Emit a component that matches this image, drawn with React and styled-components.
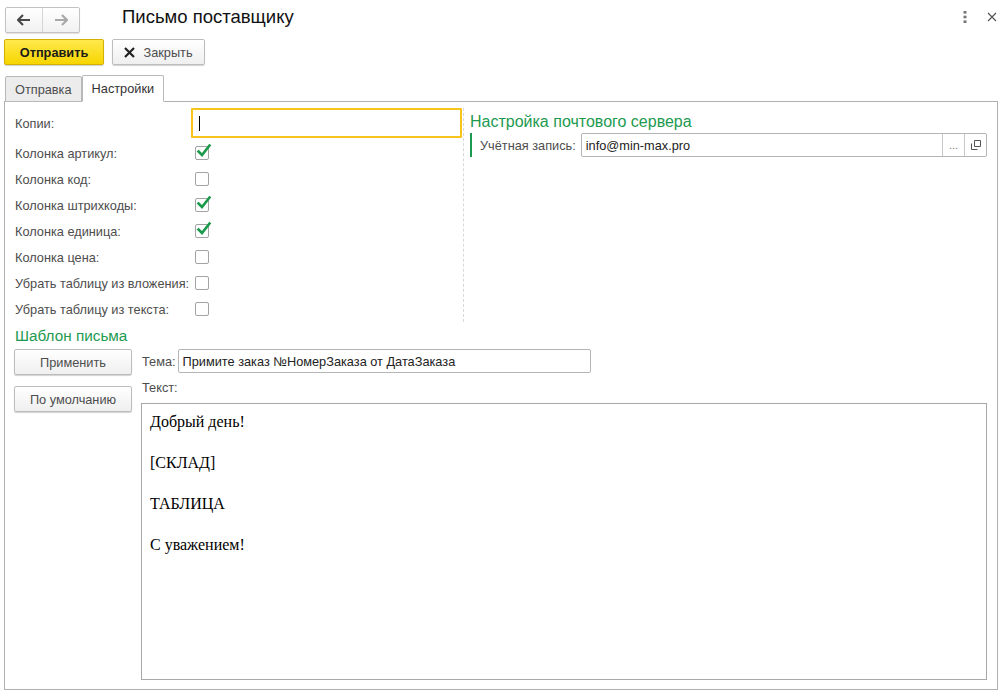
import React from 'react'
import styled, { createGlobalStyle } from 'styled-components'

const Global = createGlobalStyle`
  html, body { margin: 0; padding: 0; background: #fff; }
  body {
    font-family: "Liberation Sans", Arial, sans-serif;
    font-size: 12.75px;
    color: #4d4d4d;
  }
`

const Window = styled.div`
  width: 1004px;
  height: 696px;
  display: flex;
  flex-direction: column;
  box-sizing: border-box;
`

const Header = styled.div`
  display: flex;
  align-items: center;
  height: 34px;
  padding: 5px 0 0 5px;
  box-sizing: border-box;
`

const NavGroup = styled.div`
  display: flex;
  height: 24px;
  border: 1px solid #c3c3c3;
  border-radius: 2px;
  background: linear-gradient(#ffffff, #f1f1f1);
  box-shadow: 0 1px 1px rgba(0,0,0,0.12);
`

const NavBtn = styled.div`
  width: 36px;
  display: flex;
  align-items: center;
  justify-content: center;
  & + & { border-left: 1px solid #d6d6d6; }
`

const Title = styled.div`
  font-size: 18.5px;
  color: #111;
  margin-left: 42px;
  margin-top: -5px;
  flex: 1;
`

const HeaderIcons = styled.div`
  display: flex;
  align-items: center;
  gap: 20px;
  margin-right: 7px;
  margin-top: -5px;
`

const Toolbar = styled.div`
  display: flex;
  gap: 8px;
  padding: 5px 0 0 4px;
  height: 36px;
  box-sizing: border-box;
`

const Button = styled.div`
  height: 26px;
  box-sizing: border-box;
  border: 1px solid ${p => (p.$primary ? '#d4b000' : '#bdbdbd')};
  border-radius: 2px;
  background: ${p => (p.$primary ? 'linear-gradient(#ffe94d, #f7d500)' : 'linear-gradient(#ffffff, #efefef)')};
  box-shadow: 0 1px 1px rgba(0,0,0,0.18);
  display: flex;
  align-items: center;
  justify-content: center;
  gap: 8px;
  width: ${p => p.$w}px;
  color: ${p => (p.$primary ? '#1a1a1a' : '#4d4d4d')};
  font-weight: ${p => (p.$primary ? 700 : 400)};
`

const Tabs = styled.div`
  display: flex;
  align-items: flex-end;
  padding-left: 5px;
  height: 31px;
  box-sizing: border-box;
  position: relative;
  z-index: 1;
`

const Tab = styled.div`
  height: ${p => (p.$active ? 27 : 26)}px;
  box-sizing: border-box;
  padding: 0 9px;
  display: flex;
  align-items: center;
  border: 1px solid #b8b8b8;
  border-bottom: ${p => (p.$active ? '1px solid #fff' : '1px solid #b8b8b8')};
  background: ${p => (p.$active ? '#fff' : '#ececec')};
  color: ${p => (p.$active ? '#333' : '#4d4d4d')};
  border-radius: 2px 2px 0 0;
  margin-bottom: -1px;
`

const Panel = styled.div`
  margin: 0 6px 6px 4px;
  border: 1px solid #b0b0b0;
  flex: 1;
  display: flex;
  flex-direction: column;
  box-sizing: border-box;
  padding: 6px 10px 9px 10px;
`

const TopSection = styled.div`
  display: flex;
`

const LeftCol = styled.div`
  width: 448px;
  border-right: 1px dashed #d8d8d8;
`

const FieldRow = styled.div`
  display: grid;
  grid-template-columns: 176px 1fr;
  align-items: center;
  height: ${p => p.$h || 26}px;
  margin-bottom: ${p => p.$mb || 0}px;
`

const Label = styled.div`
  color: #4d4d4d;
  white-space: nowrap;
`

const FocusInput = styled.div`
  height: 30px;
  box-sizing: border-box;
  border: 2px solid #f7c41a;
  border-radius: 1px;
  width: 271px;
  display: flex;
  align-items: center;
  padding-left: 6px;
`

const Caret = styled.div`
  width: 1px;
  height: 15px;
  background: #000;
`

const Box = styled.div`
  width: 14px;
  height: 14px;
  box-sizing: border-box;
  border: 1px solid #a3a3a3;
  border-radius: 2px;
  position: relative;
  margin-left: 4px;
  & svg {
    position: absolute;
    left: 0;
    top: -4px;
  }
`

const RightCol = styled.div`
  flex: 1;
  padding-left: 6px;
  padding-top: 3px;
`

const GroupTitle = styled.div`
  color: #1d9a50;
  font-size: 16px;
  height: 22px;
  line-height: 22px;
  white-space: nowrap;
`

const AccountRow = styled.div`
  display: flex;
  align-items: center;
  height: 24px;
  border-left: 2px solid #1d9a50;
  padding-left: 8px;
  gap: 5px;
`

const InputBox = styled.div`
  height: 24px;
  box-sizing: border-box;
  border: 1px solid #b5b5b5;
  border-radius: 2px;
  display: flex;
  align-items: center;
  color: #222;
  width: ${p => (p.$w ? `${p.$w}px` : 'auto')};
  flex: ${p => (p.$w ? 'none' : 1)};
  overflow: hidden;
`

const InputText = styled.div`
  flex: 1;
  padding-left: 4px;
`

const InputBtn = styled.div`
  width: 21px;
  height: 100%;
  border-left: 1px solid #c8c8c8;
  display: flex;
  align-items: center;
  justify-content: center;
  color: #777;
  font-size: 11px;
`

const TemplateTitle = styled(GroupTitle)`
  font-size: 15.3px;
  margin-top: 3px;
  height: 21px;
`

const BottomSection = styled.div`
  display: flex;
  flex: 1;
  gap: 10px;
`

const ButtonsCol = styled.div`
  display: flex;
  flex-direction: column;
  gap: 11px;
  padding-top: 3px;
  margin-left: -1px;
`

const EditorCol = styled.div`
  flex: 1;
  display: flex;
  flex-direction: column;
`

const SubjectRow = styled.div`
  display: flex;
  align-items: center;
  gap: 2px;
  height: 24px;
  margin-top: 3px;
`

const TextLabel = styled.div`
  margin-top: 7px;
  height: 23px;
`

const TextArea = styled.div`
  flex: 1;
  border: 1px solid #a8a8a8;
  margin-left: -1px;
  padding: 8px 8px;
  font-family: "Liberation Serif", "Times New Roman", serif;
  font-size: 16px;
  color: #000;
  line-height: 20.5px;
  & p { margin: 0 0 20.5px 0; }
`

const Check = () => (
  <svg width="16" height="16" viewBox="0 0 16 16">
    <path d="M2.5 8.5 L6 12 L13.5 2.5" fill="none" stroke="#1a9a4a" strokeWidth="2.6" strokeLinecap="square" />
  </svg>
)

const CheckBox = ({ checked }) => <Box>{checked && <Check />}</Box>

const options = [
  ['Колонка артикул:', true],
  ['Колонка код:', false],
  ['Колонка штрихкоды:', true],
  ['Колонка единица:', true],
  ['Колонка цена:', false],
  ['Убрать таблицу из вложения:', false],
  ['Убрать таблицу из текста:', false],
]

export default function App() {
  return (
    <Window>
      <Global />
      <Header>
        <NavGroup>
          <NavBtn>
            <svg width="14" height="12" viewBox="0 0 14 12">
              <path d="M1 6 H13 M6 1 L1 6 L6 11" fill="none" stroke="#4a4a4a" strokeWidth="2.2" />
            </svg>
          </NavBtn>
          <NavBtn>
            <svg width="14" height="12" viewBox="0 0 14 12">
              <path d="M1 6 H13 M8 1 L13 6 L8 11" fill="none" stroke="#a8a8a8" strokeWidth="2.2" />
            </svg>
          </NavBtn>
        </NavGroup>
        <Title>Письмо поставщику</Title>
        <HeaderIcons>
          <svg width="4" height="12" viewBox="0 0 4 12">
            <rect x="0.5" y="0" width="3" height="2.6" fill="#777" />
            <rect x="0.5" y="4.7" width="3" height="2.6" fill="#777" />
            <rect x="0.5" y="9.4" width="3" height="2.6" fill="#777" />
          </svg>
          <svg width="10" height="10" viewBox="0 0 10 10">
            <path d="M1 1 L9 9 M9 1 L1 9" stroke="#555" strokeWidth="1.2" />
          </svg>
        </HeaderIcons>
      </Header>

      <Toolbar>
        <Button $primary $w={100}>Отправить</Button>
        <Button $w={93}>
          <svg width="11" height="11" viewBox="0 0 11 11">
            <path d="M1 1 L10 10 M10 1 L1 10" stroke="#222" strokeWidth="2.2" />
          </svg>
          Закрыть
        </Button>
      </Toolbar>

      <Tabs>
        <Tab>Отправка</Tab>
        <Tab $active>Настройки</Tab>
      </Tabs>

      <Panel>
        <TopSection>
          <LeftCol>
            <FieldRow $h={30} $mb={2}>
              <Label>Копии:</Label>
              <FocusInput><Caret /></FocusInput>
            </FieldRow>
            {options.map(([label, checked]) => (
              <FieldRow key={label}>
                <Label>{label}</Label>
                <CheckBox checked={checked} />
              </FieldRow>
            ))}
          </LeftCol>
          <RightCol>
            <GroupTitle>Настройка почтового сервера</GroupTitle>
            <AccountRow>
              <Label>Учётная запись:</Label>
              <InputBox>
                <InputText>info@min-max.pro</InputText>
                <InputBtn>...</InputBtn>
                <InputBtn>
                  <svg width="10" height="10" viewBox="0 0 10 10">
                    <path d="M3.5 0.5 H9.5 V6.5 H3.5 Z" fill="none" stroke="#555" />
                    <path d="M0.5 3.5 V9.5 H6.5" fill="none" stroke="#555" />
                  </svg>
                </InputBtn>
              </InputBox>
            </AccountRow>
          </RightCol>
        </TopSection>

        <TemplateTitle>Шаблон письма</TemplateTitle>

        <BottomSection>
          <ButtonsCol>
            <Button $w={118}>Применить</Button>
            <Button $w={118}>По умолчанию</Button>
          </ButtonsCol>
          <EditorCol>
            <SubjectRow>
              <Label>Тема:</Label>
              <InputBox $w={413}>
                <InputText>Примите заказ №НомерЗаказа от ДатаЗаказа</InputText>
              </InputBox>
            </SubjectRow>
            <TextLabel>Текст:</TextLabel>
            <TextArea>
              <p>Добрый день!</p>
              <p>[СКЛАД]</p>
              <p>ТАБЛИЦА</p>
              <p>С уважением!</p>
            </TextArea>
          </EditorCol>
        </BottomSection>
      </Panel>
    </Window>
  )
}
